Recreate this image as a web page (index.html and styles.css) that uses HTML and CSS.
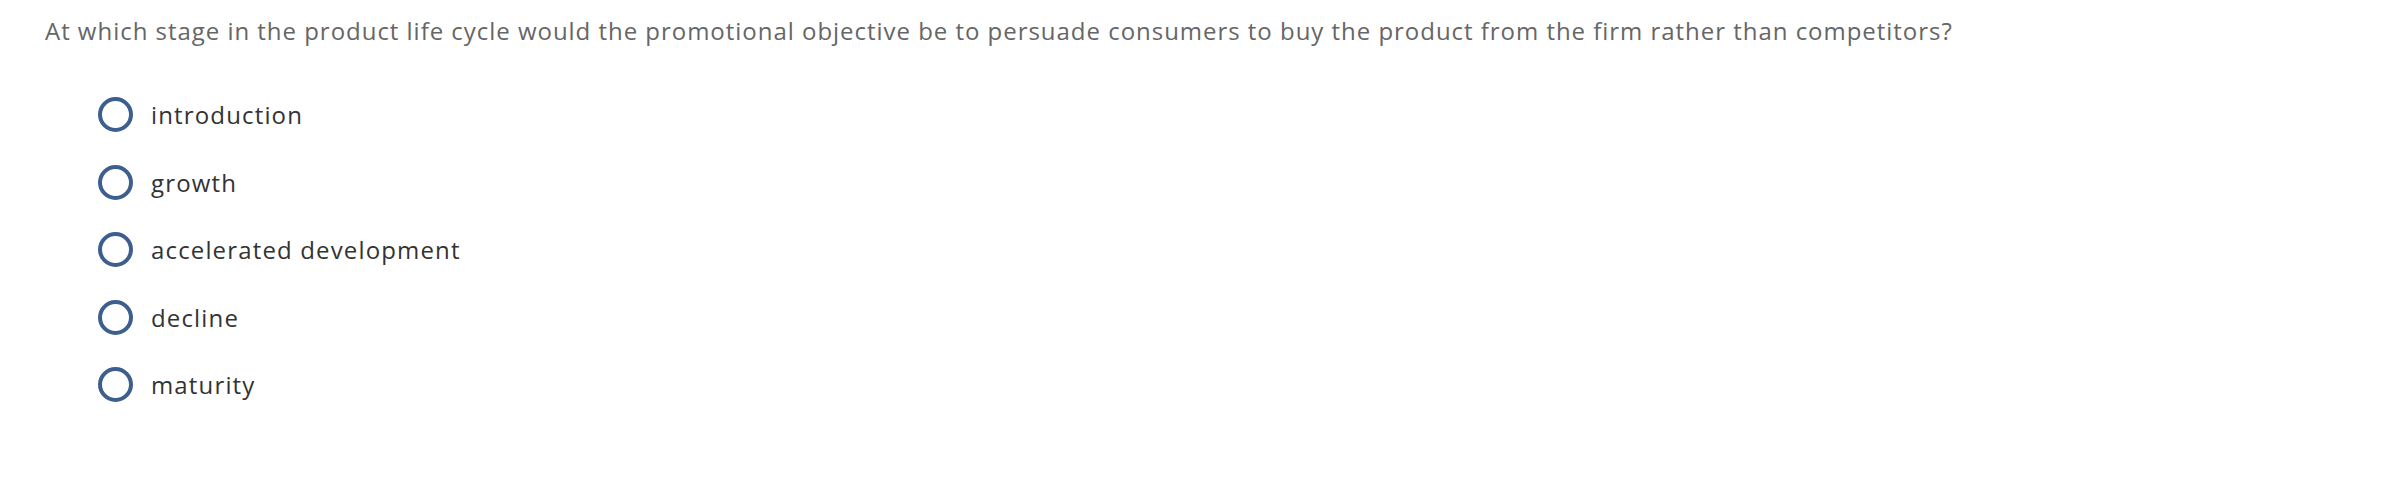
FILE: index.html
```html
<!DOCTYPE html>
<html>
<head>
<meta charset="utf-8">
<link rel="stylesheet" href="styles.css">
</head>
<body>
<div class="question">
  <p class="prompt">At which stage in the product life cycle would the promotional objective be to persuade consumers to buy the product from the firm rather than competitors?</p>
  <ul class="options">
    <li class="option"><span class="radio"></span><span class="label">introduction</span></li>
    <li class="option"><span class="radio"></span><span class="label">growth</span></li>
    <li class="option"><span class="radio"></span><span class="label">accelerated development</span></li>
    <li class="option"><span class="radio"></span><span class="label">decline</span></li>
    <li class="option"><span class="radio"></span><span class="label">maturity</span></li>
  </ul>
</div>
</body>
</html>
```
FILE: styles.css
```css
html, body {
  margin: 0;
  padding: 0;
  background: #ffffff;
}
body {
  font-family: "Open Sans", "Liberation Sans", sans-serif;
}
.question {
  padding: 14px 0 0 45px;
}
.prompt {
  margin: 0;
  font-size: 24px;
  line-height: 34px;
  letter-spacing: 0.97px;
  color: #666666;
}
.options {
  list-style: none;
  margin: 49px 0 0 53px;
  padding: 0;
  display: flex;
  flex-direction: column;
  gap: 32.5px;
}
.option {
  display: flex;
  align-items: center;
  height: 35px;
}
.radio {
  box-sizing: border-box;
  width: 35px;
  height: 35px;
  border: 4px solid #3d5f8f;
  border-radius: 50%;
  flex: none;
}
.label {
  margin-left: 18px;
  font-size: 24px;
  letter-spacing: 1.15px;
  color: #333333;
}
```
